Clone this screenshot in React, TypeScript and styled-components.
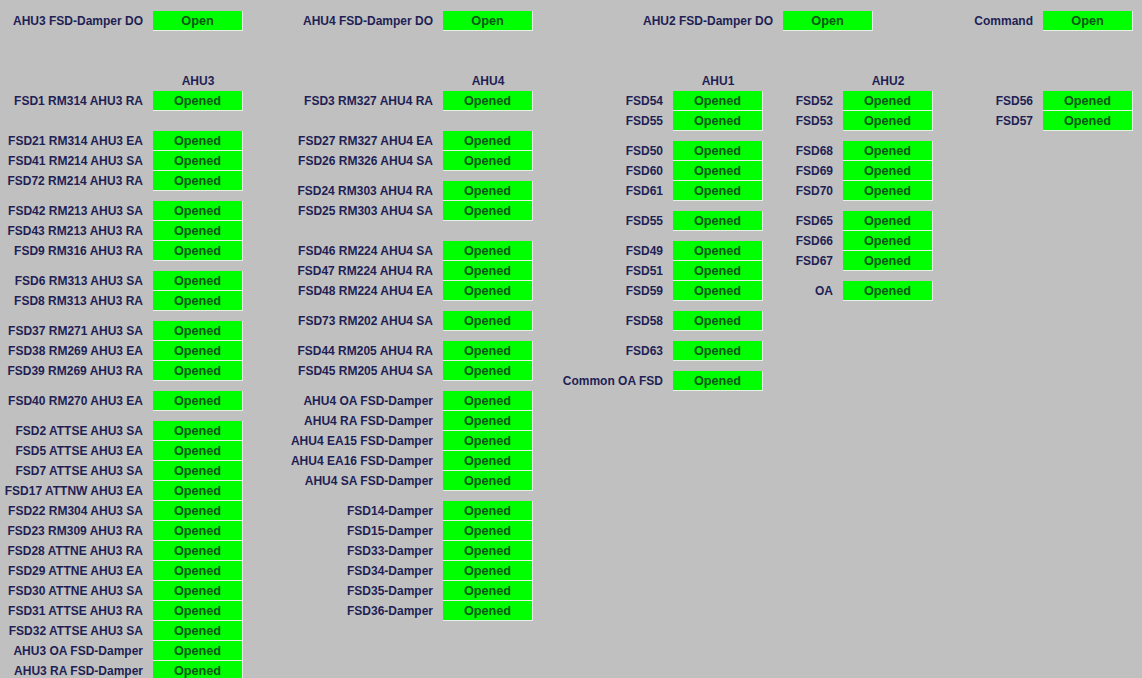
import React from "react";
import styled, { createGlobalStyle } from "styled-components";

const Global = createGlobalStyle`
  html, body { margin: 0; padding: 0; overflow: hidden; background: #c0c0c0; }
  body { font-family: "Liberation Sans", Arial, sans-serif; }
`;

const Page = styled.div`
  width: 1142px;
  height: 678px;
  background: #c0c0c0;
  padding-top: 11px;
  box-sizing: border-box;
  overflow: hidden;
`;

const TopBar = styled.div`
  display: flex;
`;

const Section = styled.div`
  display: flex;
  margin-top: 40px;
`;

const Column = styled.div<{ $w: number }>`
  width: ${(p) => p.$w}px;
  display: flex;
  flex-direction: column;
`;

const Header = styled.div`
  height: 20px;
  display: flex;
  justify-content: flex-end;
`;

const HeaderText = styled.div`
  width: 90px;
  text-align: center;
  font-size: 12px;
  font-weight: bold;
  color: #1f1f55;
  line-height: 20px;
`;

const Row = styled.div<{ $sep: number }>`
  display: flex;
  align-items: center;
  gap: 10px;
  height: 20px;
  margin-top: ${(p) => p.$sep}px;
`;

const Label = styled.div`
  flex: 1;
  text-align: right;
  font-size: 12px;
  font-weight: bold;
  color: #1f1f55;
  white-space: nowrap;
  line-height: 20px;
`;

const Box = styled.div`
  width: 89px;
  height: 19px;
  background: #00ff00;
  border-right: 1px solid #e6f0e6;
  border-bottom: 1px solid #e6f0e6;
  color: #0b5518;
  font-size: 12.7px;
  font-weight: bold;
  text-align: center;
  line-height: 21px;
  flex: none;
  overflow: visible;
`;

type Item = [string, number];

const col1: Item[] = [
  ["FSD1 RM314 AHU3 RA", 0],
  ["FSD21 RM314 AHU3 EA", 20],
  ["FSD41 RM214 AHU3 SA", 0],
  ["FSD72 RM214 AHU3 RA", 0],
  ["FSD42 RM213 AHU3 SA", 10],
  ["FSD43 RM213 AHU3 RA", 0],
  ["FSD9 RM316 AHU3 RA", 0],
  ["FSD6 RM313 AHU3 SA", 10],
  ["FSD8 RM313 AHU3 RA", 0],
  ["FSD37 RM271 AHU3 SA", 10],
  ["FSD38 RM269 AHU3 EA", 0],
  ["FSD39 RM269 AHU3 RA", 0],
  ["FSD40 RM270 AHU3 EA", 10],
  ["FSD2 ATTSE AHU3 SA", 10],
  ["FSD5 ATTSE AHU3 EA", 0],
  ["FSD7 ATTSE AHU3 SA", 0],
  ["FSD17 ATTNW AHU3 EA", 0],
  ["FSD22 RM304 AHU3 SA", 0],
  ["FSD23 RM309 AHU3 RA", 0],
  ["FSD28 ATTNE AHU3 RA", 0],
  ["FSD29 ATTNE AHU3 EA", 0],
  ["FSD30 ATTNE AHU3 SA", 0],
  ["FSD31 ATTSE AHU3 RA", 0],
  ["FSD32 ATTSE AHU3 SA", 0],
  ["AHU3 OA FSD-Damper", 0],
  ["AHU3 RA FSD-Damper", 0],
];

const col2: Item[] = [
  ["FSD3 RM327 AHU4 RA", 0],
  ["FSD27 RM327 AHU4 EA", 20],
  ["FSD26 RM326 AHU4 SA", 0],
  ["FSD24 RM303 AHU4 RA", 10],
  ["FSD25 RM303 AHU4 SA", 0],
  ["FSD46 RM224 AHU4 SA", 20],
  ["FSD47 RM224 AHU4 RA", 0],
  ["FSD48 RM224 AHU4 EA", 0],
  ["FSD73 RM202 AHU4 SA", 10],
  ["FSD44 RM205 AHU4 RA", 10],
  ["FSD45 RM205 AHU4 SA", 0],
  ["AHU4 OA FSD-Damper", 10],
  ["AHU4 RA FSD-Damper", 0],
  ["AHU4 EA15 FSD-Damper", 0],
  ["AHU4 EA16 FSD-Damper", 0],
  ["AHU4 SA FSD-Damper", 0],
  ["FSD14-Damper", 10],
  ["FSD15-Damper", 0],
  ["FSD33-Damper", 0],
  ["FSD34-Damper", 0],
  ["FSD35-Damper", 0],
  ["FSD36-Damper", 0],
];

const col3: Item[] = [
  ["FSD54", 0],
  ["FSD55", 0],
  ["FSD50", 10],
  ["FSD60", 0],
  ["FSD61", 0],
  ["FSD55", 10],
  ["FSD49", 10],
  ["FSD51", 0],
  ["FSD59", 0],
  ["FSD58", 10],
  ["FSD63", 10],
  ["Common OA FSD", 10],
];

const col4: Item[] = [
  ["FSD52", 0],
  ["FSD53", 0],
  ["FSD68", 10],
  ["FSD69", 0],
  ["FSD70", 0],
  ["FSD65", 10],
  ["FSD66", 0],
  ["FSD67", 0],
  ["OA", 10],
];

const col5: Item[] = [
  ["FSD56", 0],
  ["FSD57", 0],
];

const columns: { w: number; title: string; items: Item[] }[] = [
  { w: 243, title: "AHU3", items: col1 },
  { w: 290, title: "AHU4", items: col2 },
  { w: 230, title: "AHU1", items: col3 },
  { w: 170, title: "AHU2", items: col4 },
  { w: 200, title: "", items: col5 },
];

const top: { w: number; label: string }[] = [
  { w: 243, label: "AHU3 FSD-Damper DO" },
  { w: 290, label: "AHU4 FSD-Damper DO" },
  { w: 340, label: "AHU2 FSD-Damper DO" },
  { w: 260, label: "Command" },
];

export default function App() {
  return (
    <>
      <Global />
      <Page>
        <TopBar>
          {top.map((t) => (
            <Column key={t.label} $w={t.w}>
              <Row $sep={0}>
                <Label>{t.label}</Label>
                <Box>Open</Box>
              </Row>
            </Column>
          ))}
        </TopBar>
        <Section>
          {columns.map((c, ci) => (
            <Column key={ci} $w={c.w}>
              <Header>
                <HeaderText>{c.title}</HeaderText>
              </Header>
              {c.items.map(([label, sep], i) => (
                <Row key={i} $sep={sep}>
                  <Label>{label}</Label>
                  <Box>Opened</Box>
                </Row>
              ))}
            </Column>
          ))}
        </Section>
      </Page>
    </>
  );
}
